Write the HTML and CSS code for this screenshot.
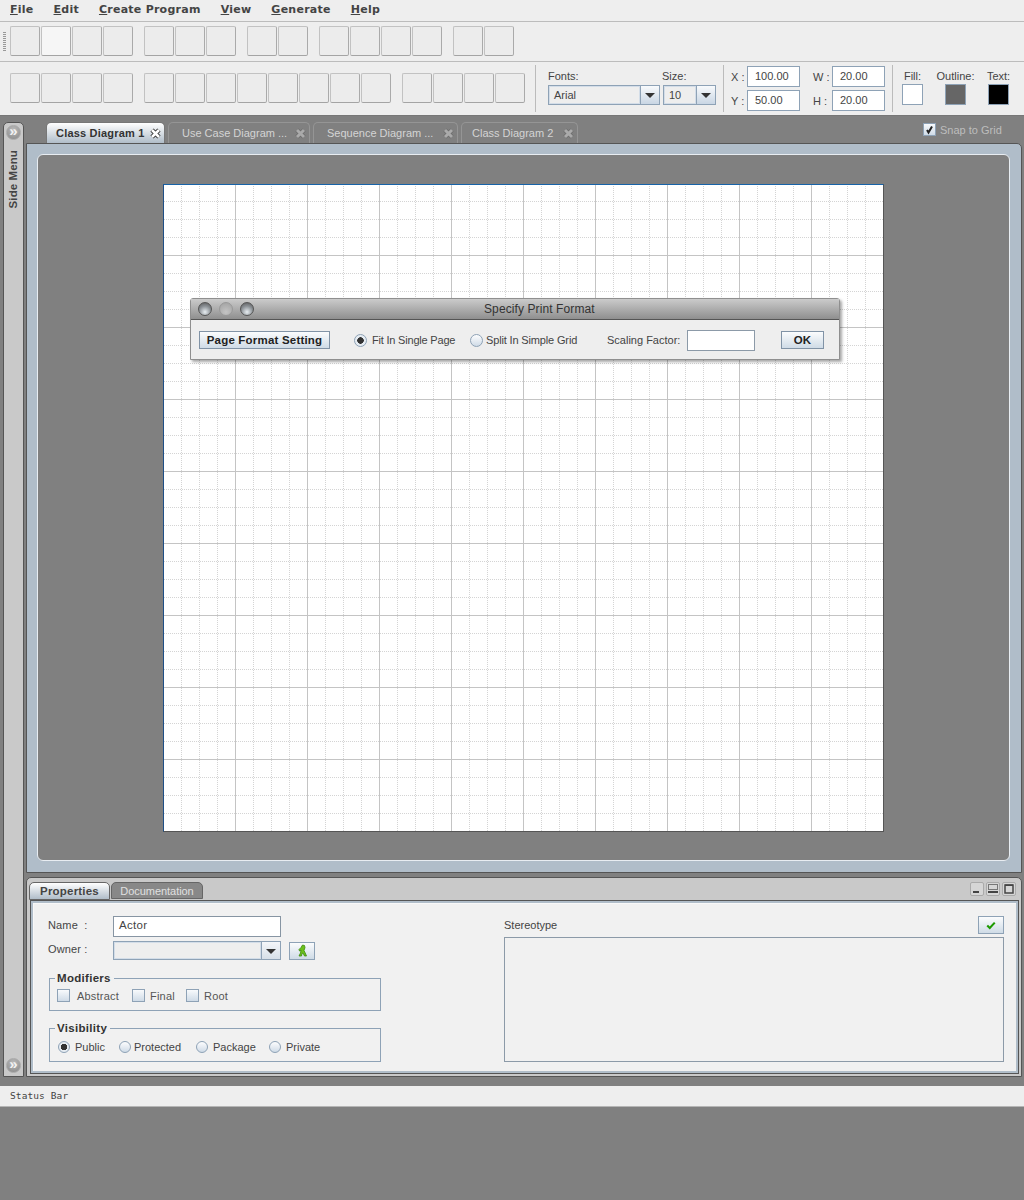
FILE: index.html
```html
<!DOCTYPE html>
<html lang="en">
<head>
    <meta charset="UTF-8">
    <meta name="viewport" content="width=device-width, initial-scale=1.0">
    <title>Class Diagram Editor</title>
    <link rel="stylesheet" href="styles.css">
</head>
<body>
    <div class="menubar">
        <span class="menu"><u>F</u>ile</span>
        <span class="menu"><u>E</u>dit</span>
        <span class="menu"><u>C</u>reate Program</span>
        <span class="menu"><u>V</u>iew</span>
        <span class="menu"><u>G</u>enerate</span>
        <span class="menu"><u>H</u>elp</span>
    </div>

    <div class="toolbar toolbar-top">
        <div class="grip"></div>
        <div class="tool-group"><button class="tool"></button><button class="tool tool-hover"></button><button class="tool"></button><button class="tool"></button></div>
        <div class="tool-group"><button class="tool"></button><button class="tool"></button><button class="tool"></button></div>
        <div class="tool-group"><button class="tool"></button><button class="tool"></button></div>
        <div class="tool-group"><button class="tool"></button><button class="tool"></button><button class="tool"></button><button class="tool"></button></div>
        <div class="tool-group"><button class="tool"></button><button class="tool"></button></div>
    </div>

    <div class="toolbar toolbar-format">
        <div class="tool-group"><button class="tool"></button><button class="tool"></button><button class="tool"></button><button class="tool"></button></div>
        <div class="tool-group"><button class="tool"></button><button class="tool"></button><button class="tool"></button><button class="tool"></button><button class="tool"></button><button class="tool"></button><button class="tool"></button><button class="tool"></button></div>
        <div class="tool-group"><button class="tool"></button><button class="tool"></button><button class="tool"></button><button class="tool"></button></div>

        <div class="format-section font-section">
            <div class="font-col">
                <span class="small-label">Fonts:</span>
                <div class="combo combo-font"><span class="combo-text">Arial</span><span class="combo-arrow"></span></div>
            </div>
            <div class="font-col">
                <span class="small-label">Size:</span>
                <div class="combo combo-size"><span class="combo-text">10</span><span class="combo-arrow"></span></div>
            </div>
        </div>

        <div class="format-section coord-section">
            <span class="coord-label">X :</span><span class="coord-input">100.00</span>
            <span class="coord-label">W :</span><span class="coord-input">20.00</span>
            <span class="coord-label">Y :</span><span class="coord-input">50.00</span>
            <span class="coord-label">H :</span><span class="coord-input">20.00</span>
        </div>

        <div class="format-section colour-section">
            <div class="colour-col fill-col"><span class="small-label">Fill:</span><span class="swatch swatch-fill"></span></div>
            <div class="colour-col outline-col"><span class="small-label">Outline:</span><span class="swatch swatch-outline"></span></div>
            <div class="colour-col text-col"><span class="small-label">Text:</span><span class="swatch swatch-text"></span></div>
        </div>
    </div>

    <div class="workspace">
        <div class="side-menu">
            <span class="round-btn">&raquo;</span>
            <span class="side-title">Side Menu</span>
            <span class="round-btn side-bottom">&raquo;</span>
        </div>

        <div class="main-col">
            <div class="tabs-row">
                <div class="doc-tab doc-tab-active tab-class1"><span class="doc-tab-text">Class Diagram 1</span><svg class="tab-x" width="11" height="11" viewBox="0 0 11 11"><path d="M2 2l7 7M9 2l-7 7" stroke="#333" stroke-width="4.5"/><path d="M2 2l7 7M9 2l-7 7" stroke="#fff" stroke-width="2.5"/></svg></div>
                <div class="doc-tab tab-usecase"><span class="doc-tab-text">Use Case Diagram ...</span><svg class="tab-x" width="11" height="11" viewBox="0 0 11 11"><path d="M2 2l7 7M9 2l-7 7" stroke="#6a6a6a" stroke-width="4.5"/><path d="M2 2l7 7M9 2l-7 7" stroke="#aaa" stroke-width="3"/></svg></div>
                <div class="doc-tab tab-sequence"><span class="doc-tab-text">Sequence Diagram ...</span><svg class="tab-x" width="11" height="11" viewBox="0 0 11 11"><path d="M2 2l7 7M9 2l-7 7" stroke="#6a6a6a" stroke-width="4.5"/><path d="M2 2l7 7M9 2l-7 7" stroke="#aaa" stroke-width="3"/></svg></div>
                <div class="doc-tab tab-class2"><span class="doc-tab-text">Class Diagram 2</span><svg class="tab-x" width="11" height="11" viewBox="0 0 11 11"><path d="M2 2l7 7M9 2l-7 7" stroke="#6a6a6a" stroke-width="4.5"/><path d="M2 2l7 7M9 2l-7 7" stroke="#aaa" stroke-width="3"/></svg></div>
                <label class="snap"><span class="snap-box"><svg width="11" height="11" viewBox="0 0 11 11"><path d="M3 6l1.500 2.500 3.500-6" fill="none" stroke="#222" stroke-width="2"/></svg></span>Snap to Grid</label>
            </div>

            <div class="editor-frame">
                <div class="editor-well">
                    <div class="canvas">
                        <svg class="grid" width="719" height="646">
                            <defs>
                                <pattern id="gridTile" y="-1" width="72" height="72" patternUnits="userSpaceOnUse">
                                    <path d="M18 0V72M36 0V72M54 0V72M0 18H72M0 36H72M0 54H72" stroke="#d4d4d4" stroke-width="1" stroke-dasharray="1 1" shape-rendering="crispEdges" transform="translate(-0.5 -0.5)"/>
                                    <path d="M71.5 0V72M0 71.5H72" stroke="#c4c4c4" stroke-width="1" shape-rendering="crispEdges"/>
                                </pattern>
                            </defs>
                            <rect width="719" height="646" fill="url(#gridTile)"/>
                        </svg>

                        <div class="print-dialog">
                            <div class="dialog-title">
                                <span class="orb"></span><span class="orb orb-dim"></span><span class="orb"></span>
                                <span class="dialog-title-text">Specify Print Format</span>
                            </div>
                            <div class="dialog-body">
                                <button class="btn btn-format">Page Format Setting</button>
                                <label class="radio-row radio-fit"><span class="radio radio-on"></span>Fit In Single Page</label>
                                <label class="radio-row radio-split"><span class="radio"></span>Split In Simple Grid</label>
                                <span class="scale-label">Scaling Factor:</span>
                                <span class="scale-input"></span>
                                <button class="btn btn-ok">OK</button>
                            </div>
                        </div>
                    </div>
                </div>
            </div>

            <div class="props-panel">
                <div class="props-head">
                    <div class="props-tab props-tab-active">Properties</div>
                    <div class="props-tab props-tab-doc">Documentation</div>
                    <div class="win-btns">
                        <span class="win-btn"><svg width="12" height="12" viewBox="0 0 12 12"><rect x="2" y="8" width="6" height="2" fill="#444"/></svg></span>
                        <span class="win-btn"><svg width="12" height="12" viewBox="0 0 12 12"><rect x="1.500" y="1.500" width="9" height="5" fill="none" stroke="#777"/><rect x="1" y="8" width="10" height="2" fill="#444"/></svg></span>
                        <span class="win-btn"><svg width="12" height="12" viewBox="0 0 12 12"><rect x="2" y="2" width="8" height="8" fill="none" stroke="#444" stroke-width="1.500"/><rect x="2" y="1.500" width="8" height="1.500" fill="#444"/></svg></span>
                    </div>
                </div>
                <div class="props-body">
                    <div class="props-left">
                        <div class="field-row name-row">
                            <span class="field-label">Name &nbsp;:</span>
                            <span class="text-input">Actor</span>
                        </div>
                        <div class="field-row owner-row">
                            <span class="field-label">Owner :</span>
                            <div class="combo combo-owner"><span class="combo-text"></span><span class="combo-arrow"></span></div>
                            <button class="btn-icon btn-actor"><svg width="12" height="14" viewBox="0 0 12 14"><path d="M6.500 1l2 .5.500 2-1 3 1 2 1.500 3.500h-2l-1.500-3-1 .500-.500 2.500h-2.500l1.500-3 .500-3-1.500 1-.500-1.500 2-2z" fill="#6cc01c" stroke="#3b8a0a" stroke-width=".8"/></svg></button>
                        </div>
                        <fieldset class="group group-mods">
                            <legend>Modifiers</legend>
                            <label class="check-item check-abstract"><span class="check-box"></span>Abstract</label>
                            <label class="check-item check-final"><span class="check-box"></span>Final</label>
                            <label class="check-item check-root"><span class="check-box"></span>Root</label>
                        </fieldset>
                        <fieldset class="group group-vis">
                            <legend>Visibility</legend>
                            <label class="radio-row vis-public"><span class="radio radio-on"></span>Public</label>
                            <label class="radio-row vis-protected"><span class="radio"></span>Protected</label>
                            <label class="radio-row vis-package"><span class="radio"></span>Package</label>
                            <label class="radio-row vis-private"><span class="radio"></span>Private</label>
                        </fieldset>
                    </div>
                    <div class="props-right">
                        <div class="stereo-head">
                            <span class="field-label">Stereotype</span>
                            <button class="btn-icon btn-check"><svg width="10" height="9" viewBox="0 0 12 10"><path d="M1.500 5l3 3 6-6.500" fill="none" stroke="#1d9a00" stroke-width="2.500"/></svg></button>
                        </div>
                        <div class="stereo-box"></div>
                    </div>
                </div>
            </div>
        </div>
    </div>

    <div class="statusbar">Status Bar</div>
</body>
</html>
```

FILE: styles.css
```css
* {
    box-sizing: border-box;
}
html, body {
    height: 100%;
}
body {
    margin: 0;
    background-color: #808080;
    font-family: "Liberation Sans", Arial, sans-serif;
    font-size: 11px;
    color: #333;
    overflow: hidden;
}
button {
    font-family: inherit;
    padding: 0;
}

/* menu */
.menubar {
    height: 22px;
    display: flex;
    align-items: center;
    padding: 0 0 3px 10px;
    background: #eee;
    border-bottom: 1px solid #bcbcbc;
    font-family: "DejaVu Sans", sans-serif;
    font-size: 11px;
    font-weight: bold;
    letter-spacing: 0.25px;
    color: #444;
}
.menu {
    margin-right: 20px;
    white-space: nowrap;
}

/* toolbars */
.toolbar {
    display: flex;
    background: #eee;
    padding-left: 10px;
}
.toolbar-top {
    height: 40px;
    padding-top: 4px;
    border-bottom: 1px solid #bcbcbc;
    position: relative;
}
.grip {
    position: absolute;
    left: 3px;
    top: 10px;
    width: 3px;
    height: 19px;
    background: repeating-linear-gradient(#999 0 1px, #eee 1px 2px);
}
.toolbar-format {
    height: 54px;
    border-bottom: 1px solid #777;
}
.toolbar-format .tool-group {
    margin-top: 11px;
}
.tool-group {
    display: flex;
    gap: 1px;
    margin-right: 11px;
}
.tool {
    width: 30px;
    height: 30px;
    background: #ececec;
    border: 1px solid #c2c2c2;
    border-right-color: #aaa;
    border-bottom-color: #a4a4a4;
    border-radius: 2px;
}
.tool-hover {
    background: #f6f6f6;
}
.format-section {
    border-left: 1px solid #bbb;
    margin-top: 3px;
    height: 47px;
}
.small-label {
    display: block;
    font-size: 11px;
    line-height: 13px;
    color: #444;
}

/* font and size */
.font-section {
    display: flex;
    margin-left: -1px;
    padding-left: 12px;
    width: 188px;
    gap: 3px;
}
.font-col {
    padding-top: 5px;
}
.font-col .small-label {
    margin-bottom: 2px;
}
.font-col + .font-col .small-label {
    margin-left: -1px;
}
.combo {
    display: flex;
    height: 20px;
    border: 1px solid #8ea2b6;
    background: #eee;
}
.combo-text {
    flex: 1;
    padding-left: 4px;
    line-height: 16px;
    font-size: 11px;
    color: #444;
    border: 1px solid #d3dde8;
}
.combo-arrow {
    width: 19px;
    border-left: 1px solid #8ea2b6;
    background: linear-gradient(#f8fafc, #c9d6e4);
    position: relative;
}
.combo-arrow::after {
    content: "";
    position: absolute;
    left: 4px;
    top: 7px;
    border-left: 5px solid transparent;
    border-right: 5px solid transparent;
    border-top: 5px solid #333;
}
.combo-font {
    width: 112px;
}
.combo-size {
    width: 53px;
}

/* x y w h */
.coord-section {
    display: grid;
    grid-template-columns: 16px 53px 32px 53px;
    grid-auto-rows: 21px;
    row-gap: 3px;
    align-items: center;
    align-content: start;
    padding: 1px 0 0 7px;
    width: 169px;
}
.coord-label {
    font-size: 11px;
    color: #444;
}
.coord-section .coord-label:nth-child(4n+3) {
    padding-left: 13px;
}
.coord-input {
    height: 21px;
    padding-left: 7px;
    line-height: 18px;
    background: #fff;
    border: 1px solid #8ea2b6;
    font-size: 11px;
    color: #444;
}

/* colours */
.colour-section {
    display: flex;
    padding-top: 5px;
    flex: 1;
}
.colour-col {
    display: flex;
    flex-direction: column;
    align-items: center;
}
.colour-col .small-label {
    margin-bottom: 1px;
}
.fill-col {
    margin-left: 9px;
    width: 21px;
}
.outline-col {
    margin-left: 14px;
    width: 37px;
}
.text-col {
    margin-left: 14px;
    width: 21px;
}
.swatch {
    width: 21px;
    height: 21px;
    border: 1px solid #8ea2b6;
}
.swatch-fill {
    background: #fff;
}
.swatch-outline {
    background: #666;
}
.swatch-text {
    background: #000;
}

/* workspace */
.workspace {
    height: 970px;
    display: flex;
    padding: 6px 2px 0 3px;
}
.side-menu {
    width: 21px;
    height: 955px;
    display: flex;
    flex-direction: column;
    align-items: center;
    padding: 2px 0 3px;
    background: #c9c9c9;
    border: 1px solid #555;
    border-radius: 5px 5px 0 0;
}
.round-btn {
    width: 15px;
    height: 15px;
    border-radius: 50%;
    background: radial-gradient(circle at 50% 30%, #bbb, #888);
    border: 1px solid #aaa;
    color: #f2f2f2;
    font-size: 15px;
    font-weight: bold;
    line-height: 10px;
    text-align: center;
}
.side-title {
    writing-mode: vertical-rl;
    transform: rotate(180deg);
    margin: 10px 1px 0 0;
    font-size: 11.5px;
    font-weight: bold;
    color: #444;
    letter-spacing: 0.1px;
}
.side-bottom {
    margin-top: auto;
}
.main-col {
    width: 996px;
    margin-left: 2px;
}

/* document tabs */
.tabs-row {
    height: 21px;
    display: flex;
    position: relative;
    padding-left: 20px;
}
.doc-tab {
    height: 21px;
    margin-right: 3px;
    display: flex;
    align-items: center;
    background: #808080;
    border: 1px solid #959595;
    border-bottom: none;
    border-radius: 5px 5px 0 0;
    color: #d4d4d4;
    padding-left: 13px;
    position: relative;
    font-size: 11px;
}
.doc-tab-text {
    white-space: nowrap;
}
.tab-x {
    position: absolute;
    right: 3px;
    top: 5px;
}
.doc-tab-active {
    background: linear-gradient(#fff, #b0bdc9);
    border: 1px solid #777;
    border-bottom: none;
    color: #333;
    font-weight: bold;
    padding-left: 9px;
    letter-spacing: 0.2px;
}
.tab-class1 {
    width: 119px;
}
.tab-usecase {
    width: 142px;
}
.tab-sequence {
    width: 145px;
}
.tab-class2 {
    width: 117px;
    padding-left: 10px;
}
.snap {
    position: absolute;
    left: 897px;
    top: 1px;
    display: flex;
    align-items: center;
    gap: 4px;
    color: #bdbdbd;
}
.snap-box {
    width: 13px;
    height: 13px;
    background: linear-gradient(#f8fafc, #cfdbe7);
    border: 1px solid #8ea2b6;
    display: flex;
}

/* editor */
.editor-frame {
    height: 730px;
    padding: 10px 11px 12px 10px;
    background: #b0bdc9;
    border: 1px solid #555;
    border-radius: 0 5px 0 0;
}
.editor-well {
    height: 707px;
    background: #808080;
    border: 1px solid #e8edf2;
    border-radius: 6px;
    padding-top: 29px;
    padding-left: 125px;
}
.canvas {
    width: 721px;
    height: 648px;
    position: relative;
    background: #fff;
    border-left: 1px solid #1f4f86;
    border-top: 1px solid #1763a8;
    border-right: 1px solid #555;
    border-bottom: 1px solid #555;
}
.grid {
    display: block;
}

/* print dialog */
.print-dialog {
    position: absolute;
    left: 26px;
    top: 113px;
    width: 650px;
    height: 62px;
    background: #eee;
    border: 1px solid #8f8f8f;
    border-radius: 3px 3px 0 0;
    box-shadow: 2px 2px 3px rgba(0, 0, 0, 0.35);
}
.dialog-title {
    height: 21px;
    display: flex;
    align-items: center;
    gap: 7px;
    padding-left: 7px;
    position: relative;
    background: linear-gradient(#cbcbcb, #8f8f8f);
    border-bottom: 1px solid #555;
}
.orb {
    width: 14px;
    height: 14px;
    border-radius: 50%;
    border: 1px solid #555;
    background: radial-gradient(circle at 50% 75%, #e8eef2, #8a8f94 55%, #555);
}
.orb-dim {
    border-color: #999;
    background: radial-gradient(circle at 50% 75%, #c4c4c4, #a0a0a0);
}
.dialog-title-text {
    position: absolute;
    left: 293px;
    top: 3px;
    font-size: 12px;
    color: #333;
    letter-spacing: 0.1px;
}
.dialog-body {
    display: flex;
    align-items: center;
    height: 40px;
    padding-left: 8px;
}
.btn {
    height: 18px;
    background: linear-gradient(#fbfcfd, #cfdbe6);
    border: 1px solid #8193a6;
    font-size: 11.5px;
    font-weight: bold;
    color: #222;
    letter-spacing: 0.2px;
}
.btn-format {
    width: 131px;
    margin-right: 24px;
}
.radio-row {
    display: flex;
    align-items: center;
    font-size: 11px;
    color: #444;
    white-space: nowrap;
}
.radio {
    width: 13px;
    height: 13px;
    margin-right: 5px;
    border-radius: 50%;
    border: 1px solid #8ea2b6;
    background: linear-gradient(#fdfdfe, #cfdbe7);
    flex: none;
}
.radio-on {
    background: radial-gradient(circle, #333 0 3px, #e6ecf2 3.5px);
}
.radio-fit {
    width: 116px;
    letter-spacing: -0.2px;
}
.radio-split {
    width: 137px;
    letter-spacing: -0.15px;
}
.radio-split .radio {
    margin-right: 3px;
}
.scale-label {
    width: 80px;
    font-size: 11px;
    color: #444;
}
.scale-input {
    width: 68px;
    height: 21px;
    background: #fff;
    border: 1px solid #8c9aa8;
}
.btn-ok {
    width: 43px;
    margin-left: 26px;
}

/* properties */
.props-panel {
    height: 200px;
    margin-top: 4px;
    background: #c9c9c9;
    border: 1px solid #555;
    border-radius: 5px 5px 0 0;
    padding: 4px 2px 2px 2px;
}
.props-head {
    height: 18px;
    display: flex;
    gap: 1px;
    position: relative;
}
.props-tab {
    width: 92px;
    height: 17px;
    line-height: 16px;
    text-align: center;
    background: #888;
    border: 1px solid #666;
    border-radius: 5px 5px 0 0;
    color: #e0e0e0;
    font-size: 11px;
}
.props-tab-doc {
    letter-spacing: -0.05px;
}
.props-tab-active {
    width: 81px;
    height: 18px;
    background: linear-gradient(#fff, #b0bdc9);
    color: #444;
    font-weight: bold;
    font-size: 11.5px;
    letter-spacing: 0.2px;
}
.win-btns {
    position: absolute;
    right: 3px;
    top: 0;
    display: flex;
    gap: 2px;
}
.win-btn {
    width: 14px;
    height: 14px;
    background: #d6d6d6;
    border: 1px solid #aaa;
    border-radius: 2px;
    display: flex;
    align-items: center;
    justify-content: center;
}
.win-btn svg {
    flex: none;
}
.props-body {
    height: 174px;
    display: flex;
    background: #f1f1f1;
    border: 1px solid #555;
    box-shadow: inset 2px 2px 0 #b0bdc9, inset -2px -2px 0 #b0bdc9, inset 3px 3px 0 #f8f8f8;
    padding: 15px 14px 0 17px;
    margin-left: 1px;
}
.props-left {
    width: 334px;
    margin-right: 122px;
}
.field-row {
    display: flex;
}
.field-label {
    font-size: 11px;
    color: #444;
    letter-spacing: 0.15px;
    margin-top: -3px;
}
.field-row .field-label {
    width: 65px;
}
.name-row {
    height: 21px;
    align-items: center;
    margin-bottom: 4px;
}
.text-input {
    width: 168px;
    height: 21px;
    padding-left: 5px;
    line-height: 17px;
    background: #fff;
    border: 1px solid #8795a3;
    font-size: 11.5px;
    color: #444;
    letter-spacing: 0.3px;
}
.owner-row {
    align-items: center;
    margin-bottom: 12px;
}
.combo-owner {
    width: 168px;
    height: 19px;
}
.combo-owner .combo-arrow {
    background: linear-gradient(#f4f6f9, #d6dfe8);
}
.btn-icon {
    background: linear-gradient(#fbfcfd, #cfdbe6);
    border: 1px solid #8ea2b6;
    display: flex;
    align-items: center;
    justify-content: center;
}
.btn-actor {
    width: 26px;
    height: 18px;
    margin-left: 8px;
}
.group {
    margin: 0 0 0 1px;
    padding: 0 0 0 7px;
    border: 1px solid #8ea2b6;
    display: flex;
    align-items: center;
    width: 332px;
}
.group legend {
    margin-left: -2px;
    padding: 0 3px 0 2px;
    font-size: 11.5px;
    font-weight: bold;
    color: #333;
    letter-spacing: 0.3px;
    line-height: 12px;
}
.group-mods {
    height: 39px;
    margin-bottom: 11px;
    padding-bottom: 3px;
}
.group-vis {
    height: 40px;
    padding-left: 8px;
    padding-bottom: 1px;
}
.group-vis legend {
    margin-left: -3px;
}
.check-item {
    display: flex;
    align-items: center;
    font-size: 11px;
    color: #555;
    letter-spacing: 0.2px;
}
.check-box {
    width: 13px;
    height: 13px;
    margin-right: 7px;
    background: linear-gradient(#f8fafc, #cfdbe7);
    border: 1px solid #8ea2b6;
}
.check-abstract {
    width: 75px;
}
.check-final {
    width: 54px;
}
.check-final .check-box,
.check-root .check-box {
    margin-right: 5px;
}
.vis-public {
    width: 61px;
}
.group-vis .radio {
    width: 12px;
    height: 12px;
}
.vis-protected {
    width: 77px;
}
.vis-protected .radio {
    margin-right: 3px;
}
.vis-package {
    width: 73px;
}
.props-right {
    width: 500px;
}
.stereo-head {
    height: 21px;
    display: flex;
    justify-content: space-between;
    align-items: center;
}
.stereo-head .field-label {
    letter-spacing: 0;
}
.btn-check {
    width: 26px;
    height: 18px;
    margin-top: -3px;
}
.stereo-box {
    height: 125px;
    border: 1px solid #8c9aa8;
}

/* status */
.statusbar {
    height: 21px;
    padding-left: 10px;
    background: #eee;
    border-bottom: 1px solid #b5b5b5;
    font-family: "DejaVu Sans Mono", monospace;
    font-size: 9.5px;
    line-height: 20px;
    color: #444;
    letter-spacing: 0.1px;
}
```
